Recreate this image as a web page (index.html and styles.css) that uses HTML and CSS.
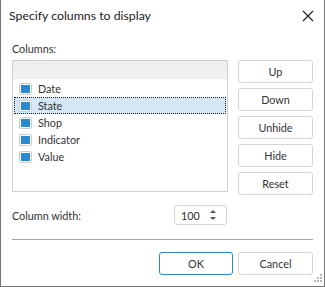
FILE: index.html
```html
<!DOCTYPE html>
<html>
  <head>
    <title>Specify columns to display</title>
    <link rel="stylesheet" href="styles.css">
  </head>
  <body>
    <div class="dialog">
      <div class="titlebar">
        <span class="title">Specify columns to display</span>
        <svg class="close" width="12" height="12" viewBox="0 0 12 12">
          <path d="M1 1 L11 11 M11 1 L1 11" stroke="#222" stroke-width="1.2" fill="none"/>
        </svg>
      </div>

      <div class="content">
        <p class="label">Columns:</p>
        <div class="main">
          <div class="list">
            <div class="list-head"></div>
            <div class="row"><span class="check"></span>Date</div>
            <div class="row selected"><span class="check"></span>State</div>
            <div class="row"><span class="check"></span>Shop</div>
            <div class="row"><span class="check"></span>Indicator</div>
            <div class="row"><span class="check"></span>Value</div>
          </div>
          <div class="side-buttons">
            <button>Up</button>
            <button>Down</button>
            <button>Unhide</button>
            <button>Hide</button>
            <button>Reset</button>
          </div>
        </div>

        <div class="width-row">
          <span class="width-label">Column width:</span>
          <div class="spin">
            <span>100</span>
            <svg width="8" height="12" viewBox="0 0 8 12">
              <path d="M4 1 L7 4 L1 4 Z" fill="#555"/>
              <path d="M4 11 L7 8 L1 8 Z" fill="#555"/>
            </svg>
          </div>
        </div>

        <div class="separator"></div>

        <div class="footer">
          <button class="ok">OK</button>
          <button class="cancel">Cancel</button>
        </div>
      </div>

      <svg class="grip" width="12" height="12" viewBox="0 0 12 12">
        <rect x="9" y="1" width="2" height="2" fill="#b8b8b8"/>
        <rect x="6" y="4" width="2" height="2" fill="#b8b8b8"/>
        <rect x="9" y="4" width="2" height="2" fill="#b8b8b8"/>
        <rect x="3" y="7" width="2" height="2" fill="#b8b8b8"/>
        <rect x="6" y="7" width="2" height="2" fill="#b8b8b8"/>
        <rect x="9" y="7" width="2" height="2" fill="#b8b8b8"/>
      </svg>
    </div>
  </body>
</html>
```

FILE: styles.css
```css
* {
  font-family: 'Lato', sans-serif;
  box-sizing: border-box;
}

body, html {
  margin: 0;
  padding: 0;
  background-color: #fff;
}

.dialog {
  position: relative;
  width: 325px;
  height: 287px;
  border: 1px solid #747474;
  border-top: none;
  background-color: #fff;
  color: #333;
  font-size: 10.8px;
}

.titlebar {
  height: 31px;
  display: flex;
  align-items: center;
  justify-content: space-between;
  padding: 0 10px 0 8px;
}

.title {
  font-size: 12.3px;
  color: #1a1a1a;
}

.content {
  padding: 0 11px;
}

.label {
  margin: 11px 0 0 0;
  line-height: 14px;
  height: 18px;
}

.main {
  display: flex;
  gap: 10px;
}

.list {
  width: 216px;
  height: 132px;
  border: 1px solid #cfcfcf;
  padding: 0 1px;
}

.list-head {
  height: 18px;
  background-color: #f0f0f0;
  margin: 0 -1px 1px -1px;
}

.row {
  height: 17px;
  display: flex;
  align-items: center;
  padding-left: 4px;
  border: 1px solid transparent;
}

.row.selected {
  background-color: #d5e7f6;
  border: 1px dotted #222;
}

.check {
  width: 13px;
  height: 12px;
  border: 1px solid #cdcdcd;
  border-radius: 2px;
  padding: 1px;
  margin-right: 6px;
  background-color: #fff;
}

.check::after {
  content: "";
  display: block;
  width: 9px;
  height: 8px;
  background-color: #2a8ad0;
}

.side-buttons {
  display: flex;
  flex-direction: column;
  gap: 5px;
}

button {
  width: 75px;
  height: 23px;
  padding: 0;
  border: 1px solid #d4d4d4;
  border-radius: 3px;
  background-color: #fff;
  color: #333;
  font-size: 10.8px;
}

.width-row {
  display: flex;
  align-items: center;
  margin-top: 10px;
}

.width-label {
  width: 162px;
}

.spin {
  width: 53px;
  height: 20px;
  border: 1px solid #d4d4d4;
  border-radius: 3px;
  display: flex;
  align-items: center;
  justify-content: space-between;
  padding: 0 9px 0 6px;
}

.separator {
  margin-top: 14px;
  height: 1px;
  background-color: #a4a4a4;
}

.footer {
  display: flex;
  justify-content: flex-end;
  gap: 5px;
  margin-top: 12px;
}

.footer .ok {
  width: 74px;
  border-color: #2e86c9;
}

.grip {
  position: absolute;
  right: 1px;
  bottom: 1px;
}
```
